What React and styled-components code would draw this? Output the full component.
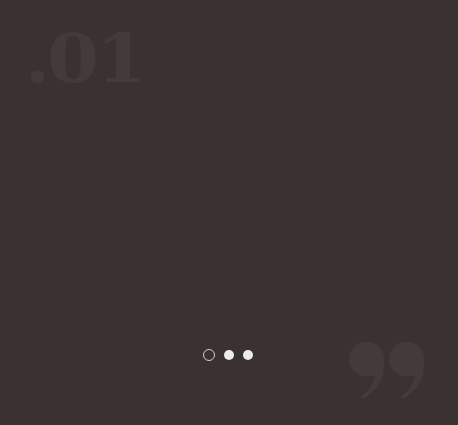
import React from "react";
import styled, { createGlobalStyle } from "styled-components";

const GlobalStyle = createGlobalStyle`
  html, body {
    margin: 0;
    padding: 0;
    background: #3a3231;
  }
`;

const QuoteMark = () => (
  <svg width="80" height="58" viewBox="0 0 80 58">
    {[0, 40].map((x) => (
      <g key={x} transform={`translate(${x} 0)`} fill="#433a39">
        <circle cx="18.5" cy="17" r="17.5" />
        <path d="M34 10 C40 32 32 47 15 57.5 L12.5 55 C24 46 28 37 25.5 29 Z" />
      </g>
    ))}
  </svg>
);

export default function App() {
  const slides = [0, 1, 2];
  const active = 0;
  return (
    <>
      <GlobalStyle />
      <Wrapper>
        <Number>.01</Number>
        <Body />
        <Footer>
          <Dots>
            {slides.map((s) => (
              <Dot key={s} $active={s === active} />
            ))}
          </Dots>
          <Quote>
            <QuoteMark />
          </Quote>
        </Footer>
      </Wrapper>
    </>
  );
}

const Wrapper = styled.div`
  width: 458px;
  height: 425px;
  background: #3a3231;
  display: flex;
  flex-direction: column;
  overflow: hidden;
  font-family: "DejaVu Serif", "Liberation Serif", serif;
`;

const Number = styled.div`
  padding: 18px 0 0 22px;
  height: 82px;
  font-size: 68px;
  font-weight: 700;
  line-height: 80px;
  color: #433a39;
  letter-spacing: -3px;
  transform: scaleX(1.1);
  transform-origin: left center;
`;

const Body = styled.div`
  flex: 1;
`;

const Footer = styled.div`
  position: relative;
  height: 76px;
`;

const Dots = styled.div`
  display: flex;
  align-items: center;
  justify-content: center;
  gap: 9px;
  margin-left: -2px;
  height: 12px;
`;

const Dot = styled.span`
  width: ${(p) => (p.$active ? "12px" : "10px")};
  height: ${(p) => (p.$active ? "12px" : "10px")};
  box-sizing: border-box;
  border-radius: 50%;
  background: ${(p) => (p.$active ? "transparent" : "#ececec")};
  border: ${(p) => (p.$active ? "1.5px solid #d2d0cf" : "none")};
`;

const Quote = styled.div`
  position: absolute;
  right: 30px;
  top: -7px;
  line-height: 0;
`;
